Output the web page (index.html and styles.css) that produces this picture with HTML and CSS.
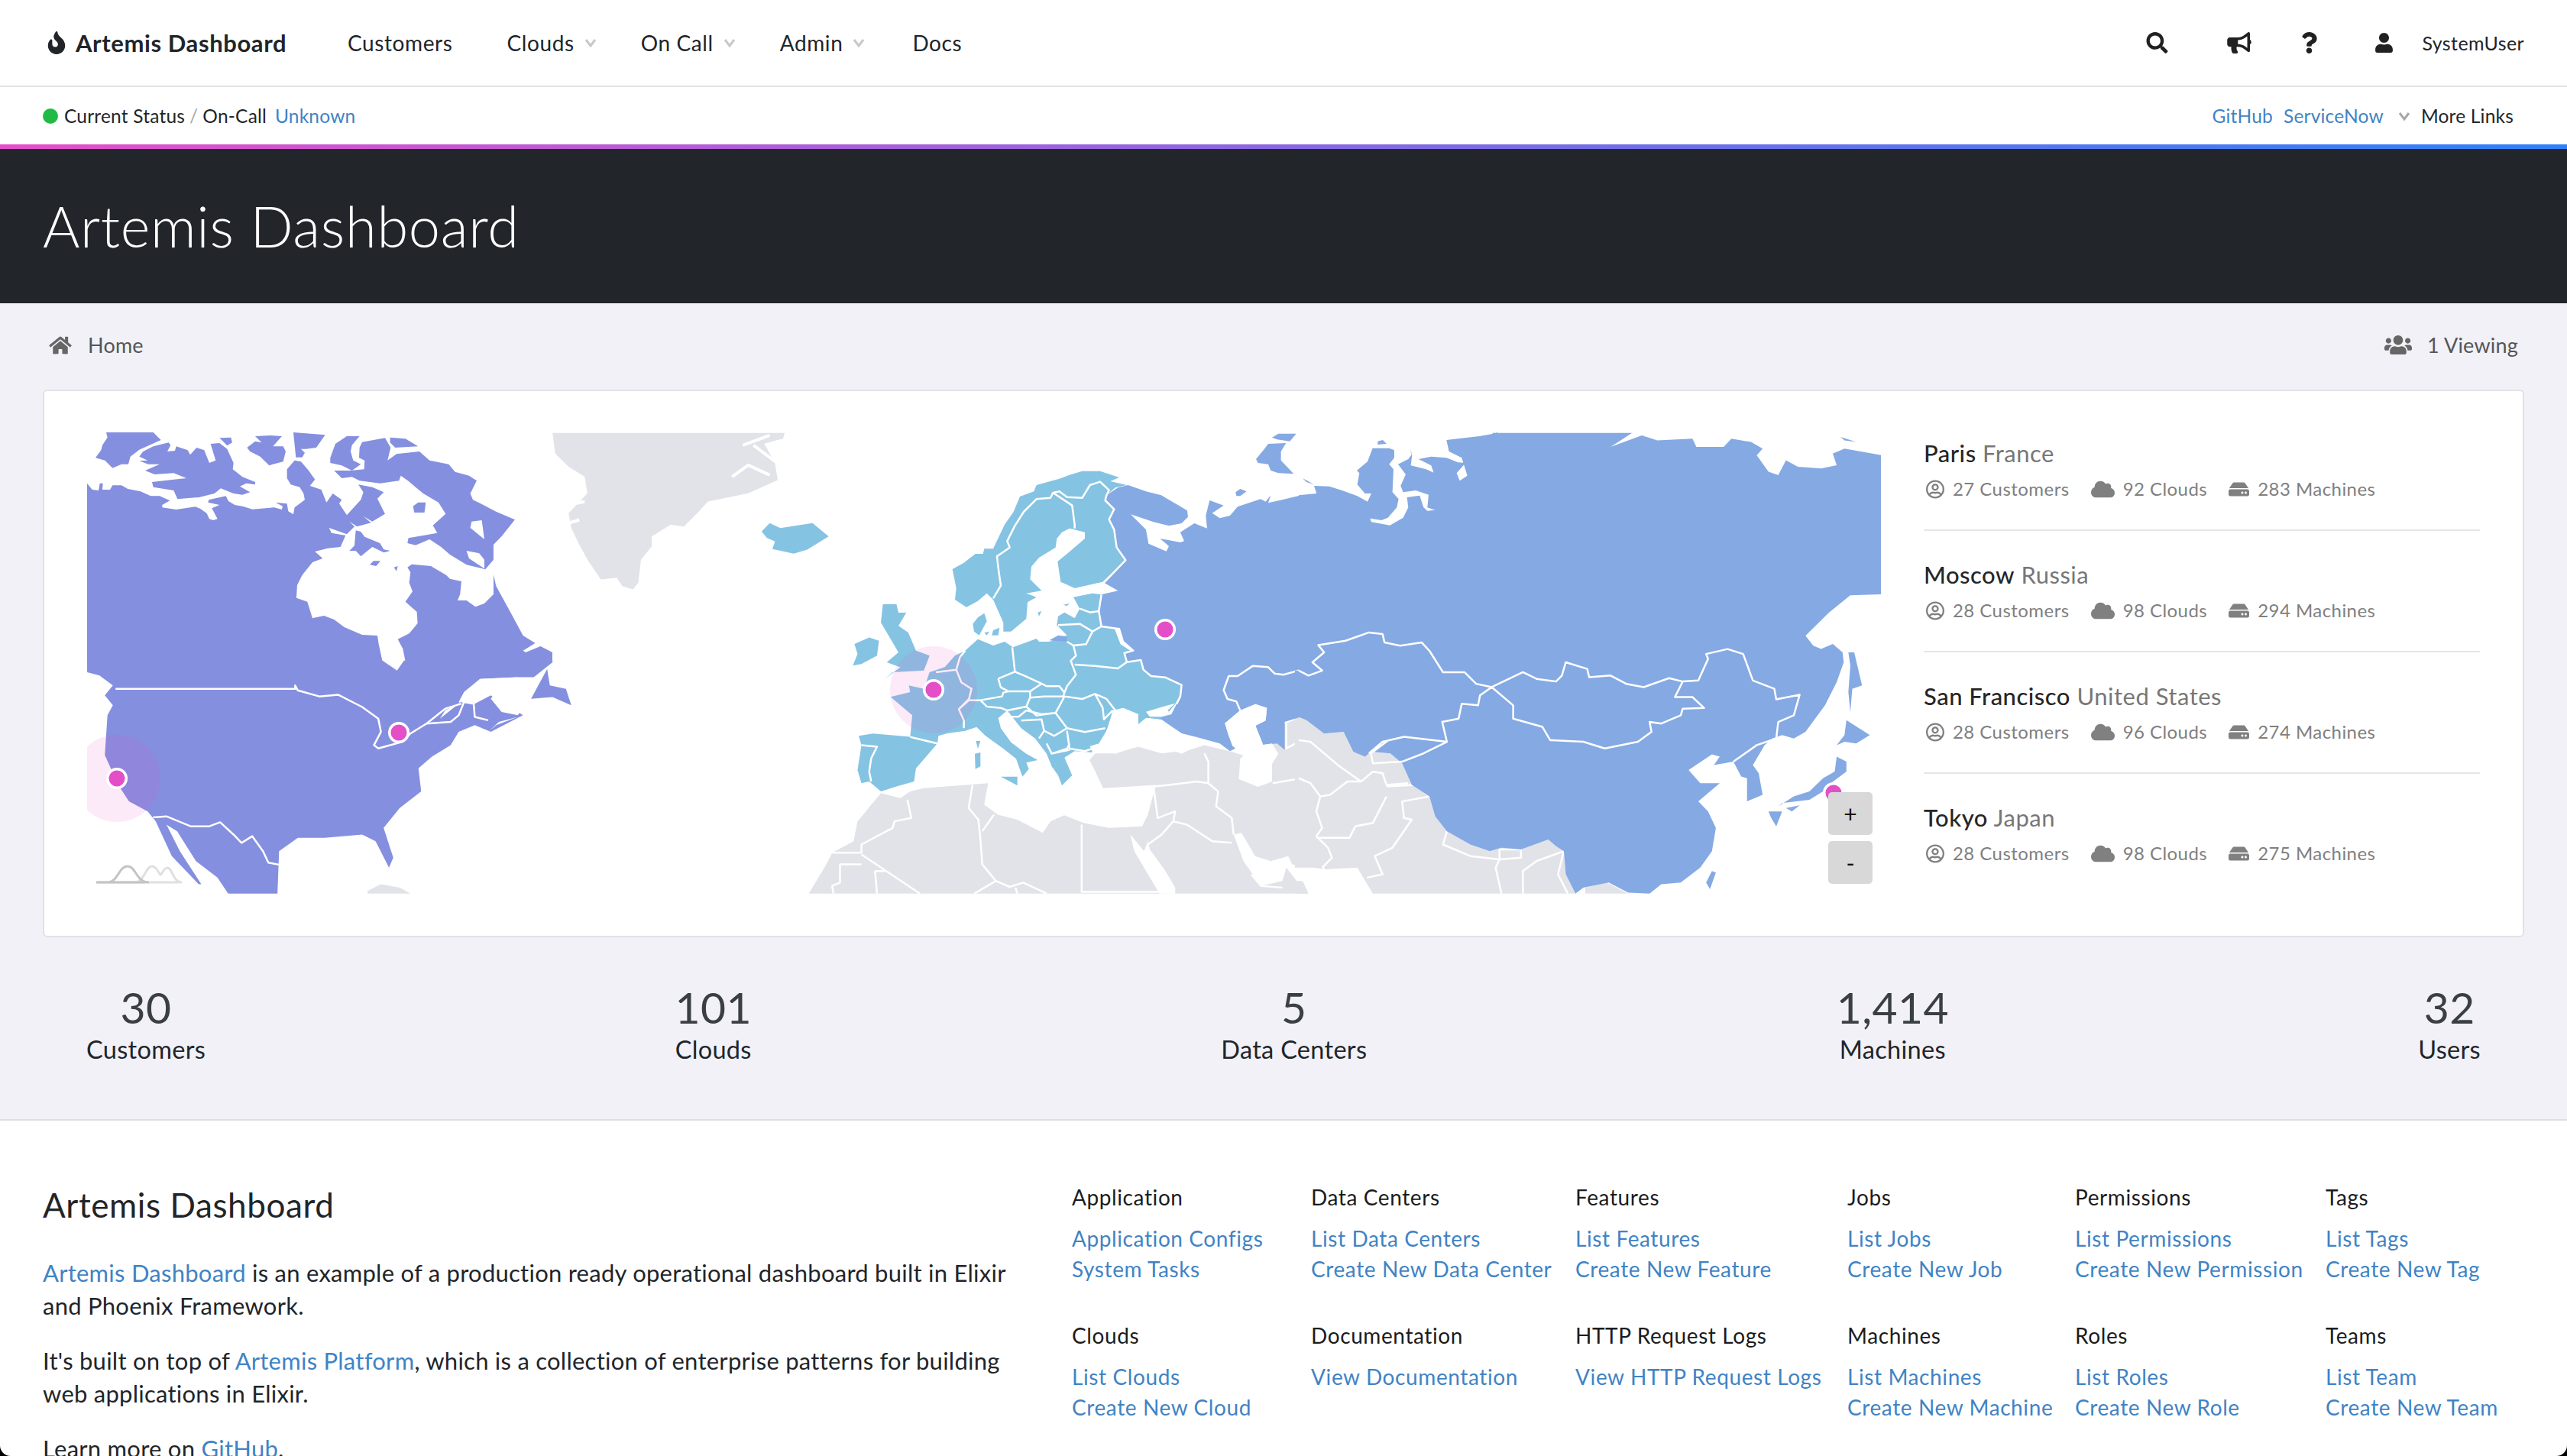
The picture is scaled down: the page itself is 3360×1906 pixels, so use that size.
FILE: index.html
```html
<!DOCTYPE html>
<html lang="en">
<head>
  <meta charset="UTF-8" />
  <meta name="viewport" content="width=device-width, initial-scale=1.0"/>
  <title>Artemis Dashboard</title>
  <link rel="stylesheet" href="styles.css">
</head>
<body>

<!-- Top nav -->
<header class="topnav">
  <a class="logo">
    <svg class="logo-icon" viewBox="0 0 384 512"><path d="M216 23.86c0-23.8-30.65-32.77-44.15-13.04C48 191.85 224 200 224 288c0 35.63-29.11 64.46-64.85 63.99-35.17-.45-63.15-29.77-63.15-64.94v-85.51c0-21.7-26.47-32.23-41.43-16.5C27.8 213.16 0 261.33 0 320c0 105.87 86.13 192 192 192s192-86.13 192-192c0-170.29-168-193-168-296.14z"/></svg>
    Artemis Dashboard
  </a>
  <nav class="menu">
    <a class="menu-item item-customers">Customers</a>
    <a class="menu-item item-clouds">Clouds <svg class="chevron" viewBox="0 0 16 12"><path d="M2 2l6 8 6-8"/></svg></a>
    <a class="menu-item item-oncall">On Call <svg class="chevron" viewBox="0 0 16 12"><path d="M2 2l6 8 6-8"/></svg></a>
    <a class="menu-item item-admin">Admin <svg class="chevron" viewBox="0 0 16 12"><path d="M2 2l6 8 6-8"/></svg></a>
    <a class="menu-item">Docs</a>
  </nav>
  <div class="tools">
    <svg class="tool tool-search" viewBox="0 0 512 512"><path d="M505 442.7L405.3 343c-4.5-4.5-10.6-7-17-7H372c27.6-35.3 44-79.7 44-128C416 93.1 322.9 0 208 0S0 93.1 0 208s93.1 208 208 208c48.3 0 92.7-16.4 128-44v16.3c0 6.4 2.5 12.5 7 17l99.7 99.7c9.4 9.4 24.6 9.4 33.9 0l28.3-28.3c9.4-9.4 9.4-24.6.1-34zM208 336c-70.7 0-128-57.2-128-128 0-70.7 57.2-128 128-128 70.7 0 128 57.2 128 128 0 70.7-57.2 128-128 128z"/></svg>
    <svg class="tool tool-horn" viewBox="0 0 576 512"><path d="M576 240c0-23.63-12.95-44.04-32-55.12V32.01C544 23.26 537.02 0 512 0c-7.12 0-14.19 2.38-19.98 7.02l-85.03 68.03C364.28 109.19 310.66 128 256 128H64c-35.35 0-64 28.65-64 64v96c0 35.35 28.65 64 64 64h33.7c-1.39 10.48-2.18 21.14-2.18 32 0 39.77 9.26 77.35 25.56 110.94 5.19 10.69 16.52 17.06 28.4 17.06h74.28c26.05 0 41.69-29.84 25.9-50.56-16.4-21.52-26.15-48.36-26.15-77.44 0-11.11 1.62-21.79 4.41-32H256c54.66 0 108.28 18.81 150.98 52.95l85.03 68.03a32.023 32.023 0 0 0 19.98 7.02c24.92 0 32-22.78 32-32V295.13C563.05 284.04 576 263.63 576 240zm-96 141.42l-33.05-26.44C392.95 311.78 325.12 288 256 288v-96c69.12 0 136.95-23.78 190.95-66.98L480 98.58v282.84z"/></svg>
    <svg class="tool tool-help" viewBox="0 0 384 512"><path d="M202.021 0C122.202 0 70.503 32.703 29.914 91.026c-7.363 10.58-5.093 25.086 5.178 32.874l43.138 32.709c10.373 7.865 25.132 6.026 33.253-4.148 25.049-31.381 43.63-49.449 82.757-49.449 30.764 0 68.816 19.799 68.816 49.631 0 22.552-18.617 34.134-48.993 51.164-35.423 19.86-82.299 44.576-82.299 106.405V320c0 13.255 10.745 24 24 24h72.471c13.255 0 24-10.745 24-24v-5.773c0-42.86 125.268-44.645 125.268-160.627C377.504 66.256 286.902 0 202.021 0zM192 373.459c-38.196 0-69.271 31.075-69.271 69.271 0 38.195 31.075 69.27 69.271 69.27s69.271-31.075 69.271-69.271-31.075-69.27-69.271-69.27z"/></svg>
    <svg class="tool tool-user" viewBox="0 0 448 512"><path d="M224 256c70.7 0 128-57.3 128-128S294.7 0 224 0 96 57.3 96 128s57.3 128 128 128zm89.6 32h-16.7c-22.2 10.2-46.9 16-72.9 16s-50.6-5.8-72.9-16h-16.7C60.2 288 0 348.2 0 422.4V464c0 26.5 21.5 48 48 48h352c26.5 0 48-21.5 48-48v-41.6c0-74.2-60.2-134.4-134.4-134.4z"/></svg>
    <span class="username">SystemUser</span>
  </div>
</header>

<!-- Status bar -->
<div class="statusbar">
  <div class="status-left">
    <span class="status-dot"></span>
    <span>Current Status</span>
    <span class="slash">/</span>
    <span>On-Call</span>
    <a class="link">Unknown</a>
  </div>
  <div class="status-right">
    <a class="link">GitHub</a>
    <a class="link">ServiceNow</a>
    <svg class="chevron chevron-dark" viewBox="0 0 16 12"><path d="M2 2l6 8 6-8"/></svg>
    <span>More Links</span>
  </div>
</div>

<div class="titlebar">
  <h1>Artemis Dashboard</h1>
</div>

<main class="content">
  <div class="breadcrumb">
    <div class="crumb">
      <svg class="crumb-icon" viewBox="0 0 576 512"><path d="M280.37 148.26L96 300.11V464a16 16 0 0 0 16 16l112.06-.29a16 16 0 0 0 15.92-16V368a16 16 0 0 1 16-16h64a16 16 0 0 1 16 16v95.64a16 16 0 0 0 16 16.05L464 480a16 16 0 0 0 16-16V300L295.67 148.26a12.19 12.19 0 0 0-15.3 0zM571.6 251.47L488 182.56V44.05a12 12 0 0 0-12-12h-56a12 12 0 0 0-12 12v72.61L318.47 43a48 48 0 0 0-61 0L4.34 251.47a12 12 0 0 0-1.6 16.9l25.5 31A12 12 0 0 0 45.15 301l235.22-193.74a12.19 12.19 0 0 1 15.3 0L530.9 301a12 12 0 0 0 16.9-1.6l25.5-31a12 12 0 0 0-1.7-16.93z"/></svg>
      <span>Home</span>
    </div>
    <div class="crumb">
      <svg class="viewing-icon" viewBox="0 0 640 512"><path d="M96 224c35.3 0 64-28.7 64-64s-28.7-64-64-64-64 28.7-64 64 28.7 64 64 64zm448 0c35.3 0 64-28.7 64-64s-28.7-64-64-64-64 28.7-64 64 28.7 64 64 64zm32 32h-64c-17.6 0-33.5 7.1-45.1 18.6 40.3 22.1 68.9 62 75.1 109.4h66c17.7 0 32-14.3 32-32v-32c0-35.3-28.7-64-64-64zm-256 0c61.9 0 112-50.1 112-112S381.9 32 320 32 208 82.1 208 144s50.1 112 112 112zm76.8 32h-8.3c-20.8 10-43.9 16-68.5 16s-47.6-6-68.5-16h-8.3C179.6 288 128 339.6 128 403.2V432c0 26.5 21.5 48 48 48h288c26.5 0 48-21.5 48-48v-28.8c0-63.6-51.6-115.2-115.2-115.2zm-223.7-13.4C161.5 263.1 145.6 256 128 256H64c-35.3 0-64 28.7-64 64v32c0 17.7 14.3 32 32 32h65.9c6.3-47.4 34.9-87.3 75.2-109.4z"/></svg>
      <span>1 Viewing</span>
    </div>
  </div>

  <!-- Map card -->
  <section class="card">
    <div class="map">
      <svg class="map-svg" viewBox="114 566 2348 604">
        <!-- west side, south of the arctic -->
        <g transform="translate(60 520) scale(.7018 .4337)">
          <path class="land-gray" d="M945,108L1378,108 1375,125 1340,140 1350,170 1360,200 1365,250 1310,290 1235,315 1215,350 1190,390 1165,385 1130,420 1130,450 1110,490 1105,560 1095,580 1075,570 1065,545 1035,550 1010,490 995,445 980,395 975,350 1010,290 1005,240 975,210 950,170Z"/>
          <path class="land-gray" d="M600,1490L625,1470 660,1480 680,1498 600,1498Z"/>
          <path class="land-na" d="M77,795L628,795 655,825 668,795 945,795 945,800 910,845 880,845 810,850 780,890 770,920 800,925 830,900 890,960 830,1010 800,990 770,1010 755,1050 720,1085 695,1120 700,1190 660,1240 630,1300 648,1390 640,1420 615,1340 590,1320 520,1330 470,1330 435,1370 432,1498 340,1498 320,1450 280,1400 245,1310 225,1290 250,1370 290,1470 285,1470 235,1385 205,1280 190,1250 155,1220 135,1170 110,1080 115,960 125,930 110,900 125,870 100,840 77,830Z"/>
          <path class="land-na" d="M905,910L935,820 940,870 970,880 980,930 945,905Z"/>
        </g>
        <!-- canada north, hudson bay and the arctic islands -->
        <g transform="translate(114 566) scale(.3333)">
          <path class="land-na" d="M0,200L20,225 45,228 50,200 62,200 60,225 90,225 100,208 135,208 160,222 210,232 250,250 285,250 325,268 295,285 295,295 350,303 425,292 445,300 470,318 480,340 495,345 512,340 490,298 520,285 475,275 478,265 545,250 555,270 580,285 610,290 650,302 735,295 765,303 768,290 740,275 785,280 790,310 810,322 815,295 855,265 850,240 835,215 800,205 785,180 785,145 815,110 840,115 870,150 895,185 875,210 920,225 940,275 965,240 1000,265 990,280 1020,325 1075,265 1085,235 1065,205 1120,215 1165,235 1140,260 1170,320 1120,350 1085,330 1115,355 1060,370 1030,350 1050,370 1020,400 950,375 960,395 1015,405 995,450 945,455 895,468 925,495 885,510 845,560 825,600 822,650 865,665 885,730 930,720 970,735 1010,765 1080,795 1140,798 1145,830 1160,900 0,900Z"/>
          <path class="land-na" d="M1250,900L1240,850 1220,812 1265,790 1298,750 1295,705 1250,665 1278,625 1265,590 1270,550 1258,530 1275,518 1350,525 1410,560 1425,575 1470,585 1465,635 1455,660 1490,660 1525,685 1560,672 1596,636 1596,558 1606,603 1670,720 1712,798 1775,837 1827,864 1827,903Z"/>
          <path class="land-na" d="M75,0L260,0 290,30 205,68 170,95 162,125 135,125 100,140 70,110 33,100 55,70 60,50 80,20Z"/>
          <path class="land-na" d="M205,95L220,75 260,55 320,40 328,50 315,75 345,72 350,55 395,70 405,88 430,60 460,70 480,120 505,110 485,45 520,42 550,65 575,120 572,145 610,175 660,195 660,205 625,200 600,212 640,235 610,245 575,240 525,220 500,240 440,255 355,262 340,228 260,215 255,195 340,185 390,180 340,160 265,165 228,150 285,125 240,125 205,112 238,110Z"/>
          <path class="land-na" d="M520,22L565,20 570,40 550,52Z"/>
          <path class="land-na" d="M628,60L660,35 685,40 660,15 720,12 765,15 730,55 770,55 780,75 770,115 730,125 715,130 680,95 640,75Z"/>
          <path class="land-na" d="M810,0L935,10 900,60 860,65 840,65 855,80 845,98 820,98Z"/>
          <path class="land-na" d="M955,100L975,45 1020,15 1070,15 1040,50 1035,75 1045,110 1075,125 1040,150 1000,130 955,120Z"/>
          <path class="land-na" d="M1190,20L1250,25 1300,55 1210,60 1190,40Z"/>
          <path class="land-na" d="M970,150L1035,150 1088,145 1090,110 1068,100 1070,60 1080,38 1170,22 1192,60 1180,110 1215,85 1305,75 1345,110 1420,125 1445,155 1500,170 1530,190 1505,240 1515,265 1543,278 1606,311 1680,343 1628,408 1596,441 1596,500 1564,538 1490,520 1425,480 1390,450 1345,420 1290,443 1258,435 1262,415 1320,405 1375,395 1358,365 1408,320 1380,275 1320,240 1290,215 1260,190 1232,170 1225,190 1150,200 1070,190 1040,175 1000,180Z"/>
          <path class="water" d="M1510,350L1550,345 1560,420 1505,375ZM1490,465L1540,475 1560,500 1560,535 1500,495Z"/>
          <path class="land-na" d="M1055,385L1075,390 1090,410 1150,435 1165,460 1190,465 1165,472 1120,450 1075,487 1055,465 1030,465 1050,445ZM1110,520L1125,505 1152,505 1135,525ZM1205,530L1220,525 1215,545ZM1280,290L1300,275 1330,275 1325,315 1285,315Z"/>
        </g>
        <g transform="translate(60 520) scale(.7018 .4337)">
          <path class="water" d="M810,850L880,845 900,860 905,910 880,960 850,950 830,910 840,885 800,880 770,925 745,945 735,970 770,925 780,890Z"/>
          <path class="water" d="M825,1010L845,980 880,965 840,990Z"/>
          <path class="water" d="M890,765L920,735 925,750 895,770Z"/>
          <path class="border" d="M130,880L465,880 465,870 470,885 510,903 545,898 590,935 620,970 625,1010 612,1050 620,1060 665,1040 680,1015 710,985 755,980 770,960 780,920 798,925 800,965 825,975"/>
          <path class="border" d="M710,985L745,940 775,925"/>
          <path class="border" d="M200,1268L225,1265 270,1295 305,1295 325,1283 350,1320 365,1345 385,1325 405,1370 415,1405 438,1412"/>
          <path class="water-fine" d="M1300,145L1350,115M1280,240L1310,205 1350,235M1365,200L1320,145M960,265L1005,265M975,325L1005,315M975,380L995,370"/>
          <path class="land-eu" d="M1335,405L1350,380 1370,395 1430,380 1460,420 1420,460 1395,472 1355,458 1360,435 1345,425Z"/>
        </g>

        <!-- gray land, north africa and the middle east -->
        <g transform="translate(1000 520) scale(.5102 .4337)">
          <path class="land-gray" d="M115,1498L160,1410 175,1375 230,1340 240,1280 300,1195 350,1210 375,1190 410,1180 520,1170 575,1165 565,1230 600,1260 650,1275 715,1315 735,1280 770,1262 820,1285 885,1300 970,1295 985,1260 1005,1170 870,1180 850,1130 835,1095 850,1075 900,1075 960,1055 1020,1075 1090,1065 1130,1050 1200,1070 1240,1085 1337,985 1382,965 1440,1015 1500,1020 1580,1090 1580,1420 1520,1420 1440,1425 1355,1410 1345,1385 1300,1400 1260,1385 1225,1315 1205,1320 1230,1400 1275,1475 1330,1460 1340,1420 1370,1465 1395,1498Z"/>
          <path class="water" d="M940,1320L975,1370 985,1340 990,1365 1030,1430 1055,1480 1055,1498 1015,1498 990,1450 950,1370Z"/>
          <path class="border" d="M175,1375L250,1375 250,1350 330,1300 335,1280 378,1270 368,1215M250,1380L400,1498M250,1410L195,1410 195,1465 175,1475 178,1498M285,1430L315,1430M285,1430L290,1498M535,1170L525,1240 550,1275 555,1330 560,1410 595,1460 540,1498M590,1260L560,1310M595,1460L630,1478 665,1465 725,1498M645,1480L650,1498M815,1290L815,1493 1015,1493"/>
          <path class="border" d="M985,1350L1020,1320 1050,1280 1085,1290 1150,1340 1200,1345M1050,1280L1055,1250 1010,1270 1000,1180M1000,1175L1040,1170 1110,1160 1140,1165 1165,1190 1160,1235 1200,1270 1205,1320M1140,1165L1140,1100 1130,1075M1305,1165L1380,1150 1425,1190 1415,1240 1425,1300 1420,1330 1450,1370 1435,1425M1340,985L1340,1060 1380,1035 1440,1075 1470,1130 1515,1150 1510,1160M1430,1205L1460,1205 1510,1160 1580,1165M1420,1330L1500,1330 1520,1300 1580,1280M1250,1440L1275,1475 1330,1480"/>
          <!-- uk, ireland, iberia -->
          <path class="land-eu" d="M305,625L340,625 345,650 365,650 345,690 370,710 390,765 425,780 410,825 330,830 310,850 350,815 315,800 345,770 320,720 300,680Z"/>
          <path class="land-eu" d="M232,745L270,725 295,735 290,780 250,805 228,810 240,775Z"/>
          <path class="land-eu" d="M243,1022L280,1015 375,1025 445,1045 390,1120 385,1160 340,1175 300,1190 270,1160 250,1165 240,1125 250,1050Z"/>
          <path class="border" d="M375,1025L445,1045M250,1050L290,1055 275,1090 270,1130 275,1160"/>
        </g>
        <g transform="translate(1700 520) scale(.5102 .4337)">
          <path class="land-gray" d="M-10,960L0,965 20,975 65,1015 115,1010 140,1070 170,1085 185,1070 235,1075 265,1105 290,1170 335,1205 350,1265 380,1310 440,1350 490,1370 520,1360 570,1365 640,1335 660,1355 680,1370 685,1440 710,1498 190,1498 150,1420 -10,1420Z"/>
          <path class="land-gray" d="M-10,1460L10,1460 25,1498 -10,1498ZM735,1480L790,1465 845,1498 735,1498Z"/>
          <path class="border" d="M0,1035L30,1040 60,1070 100,1110 160,1160 125,1160 80,1200 55,1205 45,1250 60,1300 45,1325 75,1360 85,1390 60,1420M0,1150L30,1165 55,1205M160,1160L190,1130 215,1135 225,1170 280,1165M225,1175L300,1170 335,1205 265,1220 270,1270 290,1275 240,1360 195,1385 215,1440 175,1450M45,1330L130,1330 145,1295 190,1285 225,1205M380,1310L370,1350 440,1385 515,1395M515,1395L515,1365 570,1365 570,1390 515,1395 505,1420 520,1498M575,1498L575,1430 610,1400 680,1370 665,1440 690,1498"/>
        </g>

        <!-- europe and west russia -->
        <g transform="translate(1200 610) scale(.3333)">
          <path class="land-eu" d="M140,405L185,380 230,345 260,345 265,325 300,325 345,230 380,180 405,120 460,100 470,75 560,50 600,35 650,20 720,20 795,45 760,60 825,75 780,85 745,115 740,135 775,170 755,210 775,250 790,320 820,370 730,455 620,480 565,455 553,375 590,345 660,285 660,260 600,245 570,260 550,285 545,320 480,360 450,395 445,445 490,490 430,500 470,515 435,535 430,600 370,650 340,650 340,615 300,525 275,500 240,530 195,555 150,525 155,480Z"/>
          <path class="land-eu" d="M-103,907L-26,888 -31,862 28,875 50,810 110,790 150,745 190,725 240,680 300,705 345,690 378,712 470,678 480,690 520,690 590,665 550,625 555,590 580,575 620,598 640,560 615,515 690,500 725,505 800,700 1040,860 1030,910 1015,935 990,965 1000,975 960,995 900,990 870,1015 870,975 810,950 770,965 745,1040 715,1090 680,1100 690,1125 620,1120 580,1145 610,1215 570,1255 555,1215 530,1180 510,1130 465,1070 410,1030 355,960 320,990 330,1030 370,1085 430,1130 475,1155 430,1165 440,1190 415,1220 390,1150 340,1110 270,1060 235,1025 190,1040 120,1050 85,1060 81,1090 -26,1064 -18,979Z"/>
          <path class="land-eu" d="M220,620L240,595 265,578 275,610 245,665 225,650ZM265,655L285,650 275,665ZM300,645L325,635 320,665 295,665ZM228,1130L250,1125 250,1180 230,1190ZM232,1080L250,1080 240,1110ZM330,1220L395,1220 395,1255ZM475,575L490,570 480,590ZM575,545L600,540 590,550Z"/>
          <path class="land-asia" d="M745,115L790,85 830,75 900,100 960,115 1020,150 1062,175 1065,200 1040,225 990,235 930,220 840,190 900,250 910,305 980,335 990,315 955,285 1035,300 1050,295 1035,260 1090,225 1140,245 1135,195 1150,135 1205,155 1160,185 1190,205 1230,195 1260,160 1350,130 1370,140 1390,115 1380,145 1425,135 1510,115 1510,985 1445,1005 1445,1115 1415,1090 1360,1095 1330,1020 1370,1000 1375,950 1330,935 1270,960 1210,1010 1225,1060 1250,1110 1230,1120 1190,1090 1100,1065 1040,1050 960,1000 930,1000 1000,975 1020,935 1035,905 1040,860 975,830 920,825 890,800 880,762 825,770 815,735 850,725 810,690 795,640 725,630 715,570 725,505 790,490 735,458 820,370 785,320 775,250 755,210 775,170 740,135Z"/>
          <path class="land-asia" d="M520,685L555,665 590,670 590,690Z"/>
          <path class="water" d="M1210,1010L1270,960 1330,935 1375,950 1370,1000 1330,1020 1360,1095 1395,1090 1420,1130 1395,1170 1395,1240 1340,1260 1265,1230 1270,1150 1290,1130 1240,1100 1225,1060Z"/>
          <path class="water" d="M720,1090L750,1030 770,960 810,950 870,975 870,1015 900,990 960,995 1040,1050 1075,1085 1080,1110 1040,1130 960,1100 850,1105 780,1130 740,1120 690,1100Z"/>
          <path class="water" d="M900,965L950,950 1015,932 985,960 1000,975 960,985 915,985Z"/>
          <path class="border" d="M300,520L330,470 320,400 315,355 365,320 355,295 385,235 420,180 470,130 525,125 535,105 610,155 620,230 620,245M535,105L560,100 590,122 650,125 680,75 720,62 755,95 745,115M745,115L740,135 775,170 755,210 775,250 785,320 820,370 735,458"/>
          <path class="border" d="M725,505L715,570 725,630 795,640 810,690 850,725 815,735 825,770 880,762 890,800 920,825 975,830 1040,860 1035,905 1020,935M640,560L680,575 715,570M555,625L640,620 690,650 725,630M690,650L665,700 615,705M590,690L615,705 625,745 605,765 625,820 590,865 580,890M620,780L700,785 790,795 825,770M375,712L385,805 390,810M320,835L385,808 425,825 490,855M320,835L330,870 360,885 445,885 490,855M445,885L445,910M490,855L510,865 560,865 580,890 575,905 500,905 445,910M250,920L335,905 340,890 360,885M445,910L430,945 470,980 545,970 580,905M580,905L650,915 700,895 745,915 780,960M700,895L730,950 735,995 770,960M545,970L590,1030 660,1045 740,1030M590,1040L600,1110 660,1120 720,1100M430,945L355,960 355,985 400,985 430,960 490,975 545,970M410,1000L490,995 500,1040 480,1070M500,1040L540,1060 590,1030M510,1090L530,1130 590,1110 600,1090M530,1130L600,1115M75,810L155,800 175,850 215,875 205,915 165,955 185,1000 185,1030M165,955L205,920 250,920 275,945 330,950 355,960M155,800L170,750 190,725M-26,1064L81,1090"/>
          <path class="border" d="M1510,800L1440,820 1405,815 1380,790 1320,785 1260,825 1225,825 1205,880 1220,915 1255,925 1270,960"/>
        </g>

        <!-- north russia -->
        <g transform="translate(1500 566) scale(.3333)">
          <path class="land-asia" d="M600,247L670,240 660,210 720,212 770,228 830,250 870,272 885,240 860,240 830,205 838,160 828,150 870,115 890,62 955,62 975,70 975,100 955,125 972,145 968,235 992,262 985,295 950,335 925,345 880,338 885,352 958,365 1010,335 1030,295 1025,255 1075,248 1090,295 1105,308 1135,305 1105,295 1110,245 1060,228 1010,235 1000,210 1020,165 990,125 1030,105 1045,85 1035,65 1045,90 1040,130 1100,145 1130,158 1120,130 1070,105 1120,95 1180,100 1225,118 1255,120 1220,160 1232,190 1262,170 1240,100 1190,75 1180,30 1250,22 1310,15 1365,5 1380,0 1380,950 600,950Z"/>
          <path class="land-asia" d="M495,20L520,5 590,5 565,35 515,28ZM432,105L465,65 480,45 550,42 530,75 530,110 580,163 520,160 490,150 480,125 440,120ZM352,235L370,222 395,232 370,250 355,250ZM615,180L660,205 630,195ZM910,35L930,30 945,45 910,48Z"/>
        </g>

        <!-- russia and china, east part -->
        <g transform="translate(1700 520) scale(.5102 .4337)">
          <path class="land-asia" d="M497,108L855,108 800,150 880,115 920,130 1010,125 1020,150 1090,150 1110,125 1160,135 1190,155 1175,175 1205,225 1230,235 1250,190 1280,210 1340,215 1380,205 1370,170 1400,155 1494,175 1494,595 1415,598 1360,650 1300,720 1320,750 1340,760 1370,745 1395,770 1398,800 1380,860 1350,930 1300,1010 1270,1030 1240,1020 1215,1030 1195,1050 1165,1110 1180,1135 1190,1200 1150,1220 1150,1150 1135,1145 1115,1100 1065,1110 1080,1085 1060,1078 1000,1125 1030,1165 1080,1165 1025,1220 1050,1250 1070,1300 1060,1370 1030,1420 980,1465 930,1470 900,1498 845,1495 795,1465 730,1480 710,1498 685,1440 680,1370 660,1355 640,1335 570,1365 520,1360 490,1370 440,1350 380,1310 350,1265 335,1205 290,1170 265,1105 235,1075 185,1070 170,1085 140,1070 115,1010 65,1015 20,975 0,965 -10,965 -10,825 497,825Z"/>
          <path class="land-asia" d="M1410,770L1425,770 1445,870 1420,880 1415,950 1410,890 1415,810ZM1405,975L1465,1020 1430,1045 1400,1040 1380,1050 1400,1020ZM1380,1085L1405,1100 1405,1130 1365,1165 1345,1190 1310,1215 1240,1225 1230,1235 1270,1205 1310,1190 1345,1150 1375,1130ZM1205,1250L1240,1250 1225,1295 1212,1270ZM1250,1240L1285,1232 1265,1250ZM1060,1430L1070,1435 1055,1485 1045,1465ZM1390,120L1430,135 1400,130Z"/>
          <path class="border" d="M0,825L25,840 60,825 35,800 65,770 50,748 120,735 180,710 215,715 220,740 260,750 315,740 335,765 370,830 425,830 455,865 495,875M495,875L465,900 460,930 418,925 410,970 368,980 380,1040 270,1025 215,1040 180,1075M495,875L575,830 610,850 660,858 675,840 685,800 740,820 745,845 800,840 840,865 885,875 950,848 985,858 1025,855 1050,790 1045,775 1100,760 1140,775 1165,855 1220,880 1225,912 1285,898 1270,960 1230,980 1225,1030 1175,1050 1115,1100M495,875L550,930 550,970 625,995 645,1035 730,1040 785,1060 870,1040 905,1010 900,980 930,985 980,960 985,940 1040,938 1010,905 965,905 985,858M380,1040L320,1075 265,1100 190,1105 185,1075 230,1035"/>
        </g>

        <!-- markers -->
        <circle class="halo" cx="1222" cy="903" r="57"/>
        <circle class="halo" cx="153" cy="1019" r="57"/>
        <circle class="marker" cx="1222" cy="903" r="12.3"/>
        <circle class="marker" cx="1525" cy="824" r="12.3"/>
        <circle class="marker" cx="522" cy="959" r="12.3"/>
        <circle class="marker" cx="153" cy="1019" r="12.3"/>
        <circle class="marker" cx="2400" cy="1038" r="12.3"/>

        <!-- chart logo -->
        <path class="logo-line-light" d="M126,1155H234M175,1155C190,1155 190,1134 199,1134 206,1134 208,1145 210,1145 212,1145 214,1136 219,1136 226,1136 226,1155 238,1155"/>
        <path class="logo-line-dark" d="M126,1155H190M140,1155C155,1155 155,1134 167,1134 178,1134 178,1155 195,1155"/>
      </svg>
      <div class="zoom-controls">
        <button class="zoom-btn">+</button>
        <button class="zoom-btn">-</button>
      </div>
    </div>

    <ul class="locations">
      <li class="location">
        <div class="place"><b>Paris</b> France</div>
        <div class="counts">
          <span class="count count-customers"><svg class="count-icon" viewBox="0 0 496 512"><use href="#ic-user"/></svg>27 Customers</span>
          <span class="count count-clouds"><svg class="count-icon icon-cloud" viewBox="0 0 640 512"><use href="#ic-cloud"/></svg>92 Clouds</span>
          <span class="count"><svg class="count-icon icon-hdd" viewBox="0 0 576 512"><use href="#ic-hdd"/></svg>283 Machines</span>
        </div>
      </li>
      <li class="location">
        <div class="place"><b>Moscow</b> Russia</div>
        <div class="counts">
          <span class="count count-customers"><svg class="count-icon" viewBox="0 0 496 512"><use href="#ic-user"/></svg>28 Customers</span>
          <span class="count count-clouds"><svg class="count-icon icon-cloud" viewBox="0 0 640 512"><use href="#ic-cloud"/></svg>98 Clouds</span>
          <span class="count"><svg class="count-icon icon-hdd" viewBox="0 0 576 512"><use href="#ic-hdd"/></svg>294 Machines</span>
        </div>
      </li>
      <li class="location">
        <div class="place"><b>San Francisco</b> United States</div>
        <div class="counts">
          <span class="count count-customers"><svg class="count-icon" viewBox="0 0 496 512"><use href="#ic-user"/></svg>28 Customers</span>
          <span class="count count-clouds"><svg class="count-icon icon-cloud" viewBox="0 0 640 512"><use href="#ic-cloud"/></svg>96 Clouds</span>
          <span class="count"><svg class="count-icon icon-hdd" viewBox="0 0 576 512"><use href="#ic-hdd"/></svg>274 Machines</span>
        </div>
      </li>
      <li class="location">
        <div class="place"><b>Tokyo</b> Japan</div>
        <div class="counts">
          <span class="count count-customers"><svg class="count-icon" viewBox="0 0 496 512"><use href="#ic-user"/></svg>28 Customers</span>
          <span class="count count-clouds"><svg class="count-icon icon-cloud" viewBox="0 0 640 512"><use href="#ic-cloud"/></svg>98 Clouds</span>
          <span class="count"><svg class="count-icon icon-hdd" viewBox="0 0 576 512"><use href="#ic-hdd"/></svg>275 Machines</span>
        </div>
      </li>
    </ul>
  </section>

  <!-- Totals -->
  <div class="stats">
    <div class="stat"><div class="stat-value">30</div><div class="stat-label">Customers</div></div>
    <div class="stat"><div class="stat-value">101</div><div class="stat-label">Clouds</div></div>
    <div class="stat"><div class="stat-value">5</div><div class="stat-label">Data Centers</div></div>
    <div class="stat"><div class="stat-value">1,414</div><div class="stat-label">Machines</div></div>
    <div class="stat"><div class="stat-value">32</div><div class="stat-label">Users</div></div>
  </div>
</main>

<footer class="footer">
  <div class="about">
    <h2>Artemis Dashboard</h2>
    <p><a class="link">Artemis Dashboard</a> is an example of a production ready operational dashboard built in Elixir and Phoenix Framework.</p>
    <p>It's built on top of <a class="link">Artemis Platform</a>, which is a collection of enterprise patterns for building web applications in Elixir.</p>
    <p>Learn more on <a class="link">GitHub</a>.</p>
  </div>
  <div class="sitemap">
    <div class="group"><h3>Application</h3><a class="link">Application Configs</a><a class="link">System Tasks</a></div>
    <div class="group"><h3>Data Centers</h3><a class="link">List Data Centers</a><a class="link">Create New Data Center</a></div>
    <div class="group"><h3>Features</h3><a class="link">List Features</a><a class="link">Create New Feature</a></div>
    <div class="group"><h3>Jobs</h3><a class="link">List Jobs</a><a class="link">Create New Job</a></div>
    <div class="group"><h3>Permissions</h3><a class="link">List Permissions</a><a class="link">Create New Permission</a></div>
    <div class="group"><h3>Tags</h3><a class="link">List Tags</a><a class="link">Create New Tag</a></div>

    <div class="group"><h3>Clouds</h3><a class="link">List Clouds</a><a class="link">Create New Cloud</a></div>
    <div class="group"><h3>Documentation</h3><a class="link">View Documentation</a></div>
    <div class="group"><h3>HTTP Request Logs</h3><a class="link">View HTTP Request Logs</a></div>
    <div class="group"><h3>Machines</h3><a class="link">List Machines</a><a class="link">Create New Machine</a></div>
    <div class="group"><h3>Roles</h3><a class="link">List Roles</a><a class="link">Create New Role</a></div>
    <div class="group"><h3>Teams</h3><a class="link">List Team</a><a class="link">Create New Team</a></div>

    <div class="group"></div>
    <div class="group"><h3>Event Log</h3></div>
    <div class="group"><h3>Incidents</h3></div>
  </div>
</footer>

<!-- shared icons -->
<svg class="icon-defs">
  <defs>
    <path id="ic-user" d="M248 104c-53 0-96 43-96 96s43 96 96 96 96-43 96-96-43-96-96-96zm0 144c-26.5 0-48-21.5-48-48s21.5-48 48-48 48 21.5 48 48-21.5 48-48 48zm0-240C111 8 0 119 0 256s111 248 248 248 248-111 248-248S385 8 248 8zm0 448c-49.7 0-95.1-18.3-130.1-48.4 14.9-23 40.4-38.6 69.6-39.5 20.8 6.4 40.6 9.6 60.5 9.6s39.7-3.1 60.5-9.6c29.2 1 54.7 16.5 69.6 39.5-35 30.1-80.4 48.4-130.1 48.4zm162.7-84.1c-24.4-31.4-62.1-51.9-105.1-51.9-10.2 0-26 9.6-57.6 9.6-31.5 0-47.4-9.6-57.6-9.6-42.9 0-80.6 20.5-105.1 51.9C61.9 339.2 48 299.2 48 256c0-110.3 89.7-200 200-200s200 89.7 200 200c0 43.2-13.9 83.2-37.3 115.9z"/>
    <path id="ic-cloud" d="M537.6 226.6c4.1-10.7 6.4-22.4 6.4-34.6 0-53-43-96-96-96-19.7 0-38.1 6-53.3 16.2C367 64.2 315.3 32 256 32c-88.4 0-160 71.6-160 160 0 2.7.1 5.4.2 8.1C40.2 219.8 0 273.2 0 336c0 79.5 64.5 144 144 144h368c70.7 0 128-57.3 128-128 0-61.9-44-113.6-102.4-125.4z"/>
    <path id="ic-hdd" d="M576 304v96c0 26.51-21.49 48-48 48H48c-26.51 0-48-21.49-48-48v-96c0-26.51 21.49-48 48-48h480c26.51 0 48 21.49 48 48zm-48-80a79.557 79.557 0 0 1 30.777 6.165L462.25 85.374A48.003 48.003 0 0 0 422.311 64H153.689a48 48 0 0 0-39.938 21.374L17.223 230.165A79.557 79.557 0 0 1 48 224h480zm-48 96c-17.673 0-32 14.327-32 32s14.327 32 32 32 32-14.327 32-32-14.327-32-32-32zm-96 0c-17.673 0-32 14.327-32 32s14.327 32 32 32 32-14.327 32-32-14.327-32-32-32z"/>
  </defs>
</svg>

</body>
</html>
```

FILE: styles.css
```css
html {
  margin: 0;
  height: 100%;
  overflow: hidden;
  background: #000;
}

body {
  margin: 0;
  padding: 0;
  height: 100%;
  overflow: hidden;
  font-family: "Lato", "Noto Sans", sans-serif;
  font-size: 28px;
  line-height: 42px;
  color: #212529;
  background: #fff;
  letter-spacing: 0.6px;
  border-radius: 0 0 14px 14px;
}

a {
  color: inherit;
  text-decoration: none;
}

.link {
  color: #4183c4;
}

/* Top nav */
.topnav {
  display: flex;
  align-items: center;
  height: 112px;
  padding: 0 56px 0 62px;
  border-bottom: 2px solid #e2e2e2;
  background: #fff;
}

.logo {
  display: flex;
  align-items: center;
  gap: 13px;
  font-size: 31px;
  font-weight: 700;
  width: 393px;
}

.logo-icon {
  width: 24px;
  height: 30px;
  fill: #212529;
}

.menu {
  display: flex;
  align-items: center;
}

.menu-item {
  display: flex;
  align-items: center;
  margin-right: 70px;
}

.item-customers { margin-right: 71px; }
.item-clouds { margin-right: 58px; }
.item-oncall { margin-right: 58px; }
.item-admin { margin-right: 62px; }

.chevron {
  width: 16px;
  height: 12px;
  margin-left: 13px;
  fill: none;
  stroke: #c8c8c8;
  stroke-width: 3;
}

.chevron-dark {
  stroke: #a8a8a8;
  margin: 0 0 0 -2px;
}

.tools {
  display: flex;
  align-items: center;
  margin-left: auto;
}

.tool {
  height: 28px;
  fill: #212121;
}

.tool-search { width: 29px; margin-right: 77px; }
.tool-horn { width: 32px; margin-right: 65px; }
.tool-help { width: 21px; margin-right: 75px; }
.tool-user { width: 25px; height: 26px; margin-right: 37px; }

.username {
  font-size: 25px;
  letter-spacing: 0.4px;
}

/* Status bar */
.statusbar {
  display: flex;
  align-items: center;
  justify-content: space-between;
  height: 75px;
  padding: 0 70px 0 56px;
  font-size: 24.5px;
  letter-spacing: 0.2px;
}

.status-left,
.status-right {
  display: flex;
  align-items: center;
}

.status-dot {
  width: 20px;
  height: 20px;
  border-radius: 50%;
  background: #21ba45;
  margin-right: 8px;
}

.slash {
  color: #aaa;
  margin: 0 6px;
}

.status-left .link {
  margin-left: 11px;
}

.status-right .link {
  margin-right: 14px;
}

.status-right .chevron {
  margin-right: 14px;
  margin-left: 5px;
}

.titlebar {
  height: 202px;
  padding-left: 56px;
  display: flex;
  align-items: center;
  background: #22262b;
  border-top: 6px solid;
  border-image: linear-gradient(90deg, #e44fc8, #2f80f8) 1;
  border-bottom: 0;
  border-left: 0;
  border-right: 0;
}

.titlebar h1 {
  margin: 0;
  font-size: 74px;
  font-weight: 300;
  color: #fff;
  line-height: 90px;
  letter-spacing: 0.7px;
}

/* Content */
.content {
  background: #f1f1f7;
  padding: 0 56px;
  height: 1070px;
  box-sizing: border-box;
  border-bottom: 2px solid #dedee2;
}

.breadcrumb {
  height: 113px;
  box-sizing: border-box;
  padding: 0 8px 4px;
  display: flex;
  align-items: center;
  justify-content: space-between;
  color: #555;
  font-size: 27px;
  letter-spacing: 0.2px;
}

.crumb {
  display: flex;
  align-items: center;
}

.crumb-icon {
  width: 30px;
  height: 26px;
  fill: #666;
  margin-right: 21px;
}

.viewing-icon {
  width: 36px;
  height: 29px;
  fill: #666;
  margin-right: 20px;
}

.card {
  display: flex;
  gap: 56px;
  height: 717px;
  box-sizing: border-box;
  padding: 54px 56px;
  background: #fff;
  border: 2px solid #e2e2e6;
  border-radius: 6px;
}

.map {
  position: relative;
  width: 2348px;
  height: 604px;
  flex: none;
}

.map-svg {
  display: block;
  width: 2348px;
  height: 604px;
}

.land-na { fill: #858fe0; }
.land-eu { fill: #85c3e3; }
.land-asia { fill: #85a9e3; }
.land-gray { fill: #e2e3e8; }
.water { fill: #fff; }

.water-fine,
.border {
  fill: none;
  stroke: #fff;
  stroke-linejoin: round;
  vector-effect: non-scaling-stroke;
}

.water-fine { stroke-width: 4px; }
.border { stroke-width: 2.5px; }

.halo { fill: rgba(228, 79, 200, 0.12); }

.marker {
  fill: #e44fc8;
  stroke: #fff;
  stroke-width: 3.5px;
}

.logo-line-light,
.logo-line-dark {
  fill: none;
  stroke-width: 3px;
}

.logo-line-light { stroke: #e0e0e0; }
.logo-line-dark { stroke: #c4c4c4; }

.zoom-controls {
  position: absolute;
  top: 471px;
  right: 11px;
  display: flex;
  flex-direction: column;
  gap: 8px;
}

.zoom-btn {
  width: 58px;
  height: 56px;
  padding: 0;
  border: 0;
  border-radius: 5px;
  background: #d8d8d8;
  color: #111;
  font-family: inherit;
  font-size: 30px;
}

/* Locations */
.locations {
  list-style: none;
  margin: 0;
  padding: 5px 0 0;
  flex: 1;
}

.location {
  padding-bottom: 35px;
  margin-bottom: 35px;
  border-bottom: 2px solid #e6e6e6;
}

.location:last-child {
  border-bottom: 0;
}

.place {
  font-size: 31px;
  line-height: 45px;
  color: #777;
  margin-bottom: 6px;
  letter-spacing: 0.5px;
}

.place b {
  color: #262626;
  font-weight: 500;
}

.counts {
  display: flex;
  font-size: 24px;
  line-height: 36px;
  color: #808080;
  letter-spacing: 0.45px;
}

.count {
  display: flex;
  align-items: center;
  margin-right: 28px;
}

.count-icon {
  height: 25px;
  width: 24px;
  fill: #808080;
  margin-left: 3px;
  margin-right: 11px;
}

.icon-cloud { width: 31px; margin-left: 0; }
.icon-hdd { width: 27px; margin-left: 0; }

/* Totals */
.stats {
  display: flex;
  justify-content: space-between;
  padding: 55px 57px 0;
  text-align: center;
}

.stat-value {
  font-size: 57px;
  font-weight: 400;
  line-height: 72px;
  letter-spacing: 0.4px;
  color: #3a3f44;
}

.stat-label {
  font-size: 32.5px;
  line-height: 40px;
  letter-spacing: 0.3px;
}

/* Footer */
.footer {
  display: flex;
  padding: 80px 0 0 56px;
}

.about {
  width: 1290px;
  margin-right: 57px;
  font-size: 31px;
  line-height: 43px;
  letter-spacing: 0.25px;
}

.about h2 {
  margin: 0 0 38px;
  font-size: 44px;
  font-weight: 400;
  line-height: 60px;
  letter-spacing: 0.6px;
}

.about p {
  margin: 0 0 29px;
}

.sitemap {
  display: grid;
  grid-template-columns: 313px 346px 356px 298px 328px 1fr;
  grid-auto-rows: 181px;
}

.group {
  display: flex;
  flex-direction: column;
  line-height: 40px;
}

.group h3 {
  margin: 0 0 14px;
  font-size: 28px;
  font-weight: 400;
  line-height: 40px;
  color: #1b1c1d;
}

.icon-defs {
  display: none;
}
```
